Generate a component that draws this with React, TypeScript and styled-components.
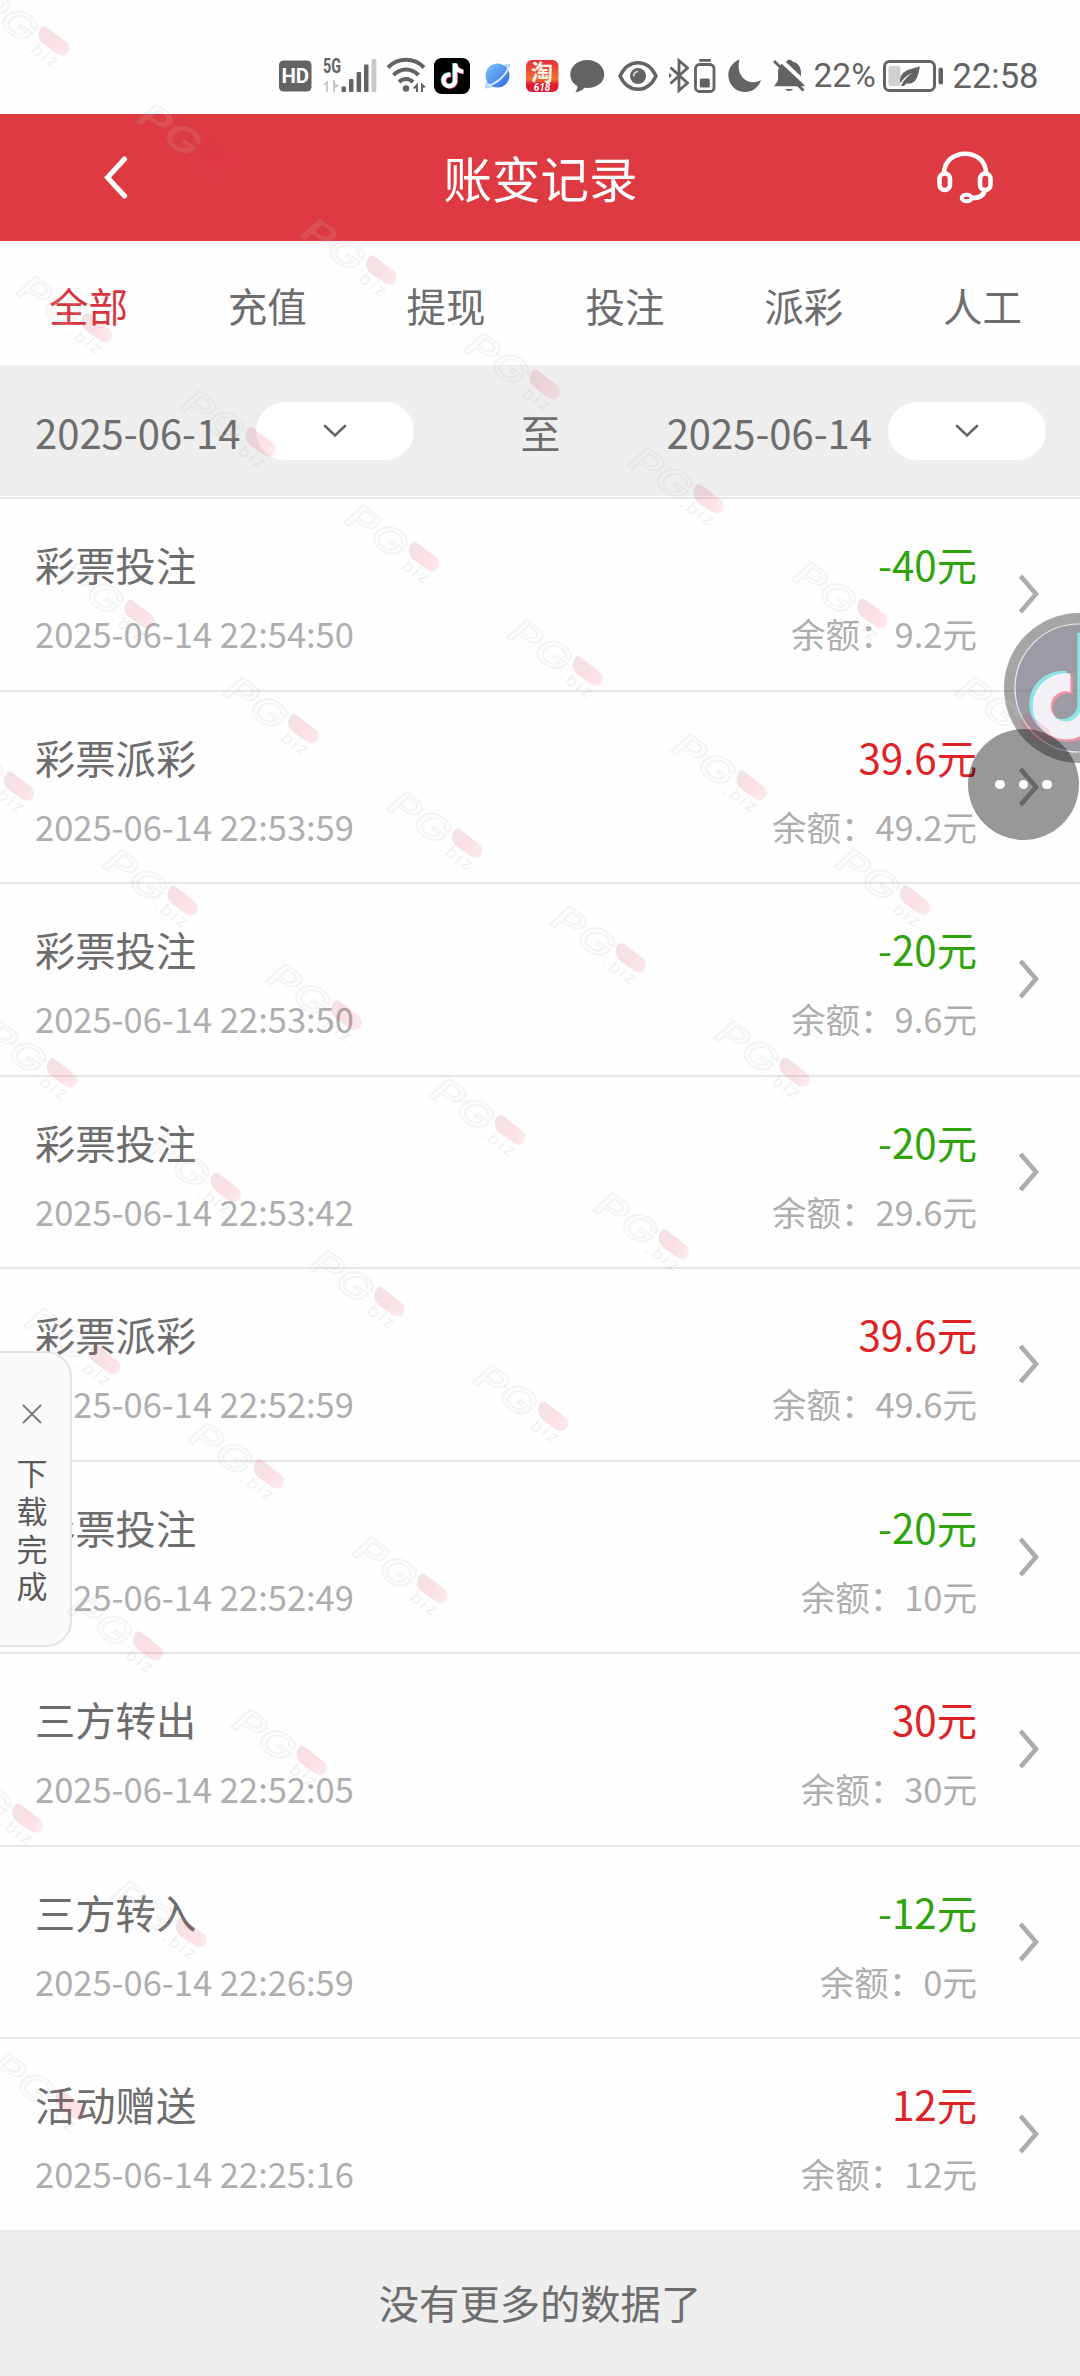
import React from "react";
import styled, { createGlobalStyle } from "styled-components";

const GlobalStyle = createGlobalStyle`
  *, *::before, *::after { box-sizing: border-box; }
  html, body { margin: 0; padding: 0; background: #fff; }
  body { font-family: "Noto Sans CJK SC", "Noto Sans", sans-serif; overflow: hidden; }
`;

const Page = styled.div`
  position: relative;
  width: 1080px;
  height: 2376px;
  overflow: hidden;
  display: flex;
  flex-direction: column;
  background: #fefefe;
  color: #6d6d6d;
`;

const StatusBar = styled.div`
  display: flex;
  align-items: center;
  height: 114px;
  padding: 37px 0 0 279px;
  flex: none;
  color: #636363;
`;

const StatusSlot = styled.div<{ $w: number; $gap?: number }>`
  flex: none;
  width: ${(p) => p.$w}px;
  height: 36px;
  margin-left: ${(p) => p.$gap ?? 0}px;
  svg { display: block; overflow: visible; }
`;

const StatusText = styled.span<{ $w: number; $gap: number; $size?: number }>`
  flex: none;
  width: ${(p) => p.$w}px;
  margin-left: ${(p) => p.$gap}px;
  font-family: Roboto, sans-serif;
  font-size: ${(p) => p.$size ?? 33.5}px;
  line-height: 36px;
  white-space: nowrap;
`;

const Header = styled.header`
  display: flex;
  align-items: center;
  justify-content: space-between;
  flex: none;
  height: 127px;
  padding: 0 87px 0 104px;
  background: #de3a41;
  color: #fff;
  svg { display: block; }
`;

const HeaderSide = styled.div<{ $end?: boolean }>`
  display: flex;
  width: 100px;
  padding-left: ${(p) => (p.$end ? 44 : 0)}px;
  margin-left: ${(p) => (p.$end ? 0 : -16)}px;
`;

const BackSlot = styled.div`
  padding-left: 16px;
`;

const Title = styled.h1`
  margin: 0 0 2px;
  font-size: 48.5px;
  line-height: 64px;
  font-weight: 400;
`;

const Tabs = styled.nav`
  display: flex;
  align-items: center;
  justify-content: space-between;
  flex: none;
  height: 124px;
  padding: 4px 58px 0 49px;
`;

const Tab = styled.span<{ $active?: boolean }>`
  font-size: 39.5px;
  line-height: 56px;
  color: ${(p) => (p.$active ? "#d8343f" : "#6d6d6d")};
`;

const FilterBar = styled.div`
  display: flex;
  align-items: center;
  justify-content: space-between;
  flex: none;
  height: 131px;
  padding: 0 34px 0 35px;
  background: #eee;
`;

const DateField = styled.div`
  display: flex;
  align-items: center;
  gap: 16px;
`;

const DateText = styled.span`
  font-size: 40px;
  line-height: 56px;
  padding-top: 2px;
`;

const DateSelect = styled.div`
  display: flex;
  align-items: center;
  justify-content: center;
  width: 158px;
  height: 58px;
  border-radius: 29px;
  background: #fff;
`;

const List = styled.div`
  flex: none;
  margin-top: 1px;
  border-bottom: 2px solid #e6e6e6;
`;

const Row = styled.div`
  display: flex;
  align-items: center;
  height: 192.5px;
  padding: 6px 40px 0 35px;
  border-top: 2px solid #e6e6e6;
`;

const Column = styled.div<{ $right?: boolean }>`
  display: flex;
  flex-direction: column;
  gap: 16px;
  flex: ${(p) => (p.$right ? "none" : "1")};
  align-items: ${(p) => (p.$right ? "flex-end" : "flex-start")};
`;

const Primary = styled.span<{ $color?: string }>`
  font-size: 40.3px;
  line-height: 56px;
  white-space: nowrap;
  color: ${(p) => p.$color ?? "#6d6d6d"};
`;

const Secondary = styled.span`
  font-size: 34.5px;
  line-height: 50px;
  white-space: nowrap;
  color: #aeaeae;
`;

const RowArrow = styled.svg`
  flex: none;
  margin: -6px 0 0 41px;
`;

const Footer = styled.footer`
  flex: 1;
  display: flex;
  align-items: center;
  justify-content: center;
  padding-bottom: 5px;
  background: #eee;
  font-size: 40.3px;
`;

const SideToast = styled.aside`
  position: absolute;
  left: -2px;
  top: 1351px;
  width: 74px;
  height: 296px;
  padding: 51px 6px 0 0;
  display: flex;
  flex-direction: column;
  align-items: center;
  gap: 29px;
  border: 2px solid #e4e4e4;
  border-radius: 0 26px 26px 0;
  background: #fafafa;
  svg { display: block; flex: none; }
`;

const ToastText = styled.div`
  display: flex;
  flex-direction: column;
  align-items: center;
  font-size: 31px;
  line-height: 37.8px;
  color: #5a5a5a;
`;

const FloatingApp = styled.svg`
  position: absolute;
  left: 1004px;
  top: 613px;
`;

const MoreBubble = styled.div`
  position: absolute;
  left: 968px;
  top: 729px;
  width: 111px;
  height: 111px;
  border-radius: 50%;
  background: rgba(0, 0, 0, 0.4);
  display: flex;
  align-items: center;
  justify-content: center;
  gap: 14px;
`;

const Dot = styled.i`
  width: 9.5px;
  height: 9.5px;
  border-radius: 50%;
  background: #fff;
`;

const WatermarkLayer = styled.svg`
  position: absolute;
  inset: 0;
  pointer-events: none;
`;

const GREEN = "#2fa30c";
const RED = "#df2226";

type Entry = { kind: string; time: string; amount: string; balance: string };

const entries: Entry[] = [
  { kind: "彩票投注", time: "2025-06-14 22:54:50", amount: "-40", balance: "9.2" },
  { kind: "彩票派彩", time: "2025-06-14 22:53:59", amount: "39.6", balance: "49.2" },
  { kind: "彩票投注", time: "2025-06-14 22:53:50", amount: "-20", balance: "9.6" },
  { kind: "彩票投注", time: "2025-06-14 22:53:42", amount: "-20", balance: "29.6" },
  { kind: "彩票派彩", time: "2025-06-14 22:52:59", amount: "39.6", balance: "49.6" },
  { kind: "彩票投注", time: "2025-06-14 22:52:49", amount: "-20", balance: "10" },
  { kind: "三方转出", time: "2025-06-14 22:52:05", amount: "30", balance: "30" },
  { kind: "三方转入", time: "2025-06-14 22:26:59", amount: "-12", balance: "0" },
  { kind: "活动赠送", time: "2025-06-14 22:25:16", amount: "12", balance: "12" },
];

const tabs = ["全部", "充值", "提现", "投注", "派彩", "人工"];

const NOTE = "M16.6 5.82c-.68-.78-1.06-1.78-1.06-2.82h-3.09v12.4a2.592 2.592 0 0 1-2.59 2.5c-1.42 0-2.6-1.16-2.6-2.6 0-1.72 1.66-3.01 3.37-2.48V9.66c-3.45-.46-6.47 2.22-6.47 5.64 0 3.33 2.76 5.7 5.69 5.7 3.14 0 5.69-2.55 5.69-5.7V9.01a7.35 7.35 0 0 0 4.3 1.38V7.3s-1.88.09-3.24-1.48z";

/* Lattice of watermark marks: [diagonal, first step, last step] */
const diagonals: [number, number, number][] = [
  [0, 0, 6], [1, 0, 5], [2, 0, 4], [3, -1, 3], [4, -1, 2],
  [5, -1, 1], [6, -1, 0], [7, -2, -1], [8, -2, -2],
];

function Watermarks() {
  const marks: [number, number][] = [];
  diagonals.forEach(([j, from, to]) => {
    for (let i = from; i <= to; i++) marks.push([52.5 + 163.7 * i + 43 * j, 41 + 114.5 * i + 286.6 * j]);
  });
  return (
    <WatermarkLayer width="1080" height="2376" viewBox="0 0 1080 2376">
      <defs>
        <linearGradient id="pill" x1="0" y1="0" x2="1" y2="0">
          <stop offset="0" stopColor="#a83a50" stopOpacity=".14" />
          <stop offset=".5" stopColor="#e23350" stopOpacity=".15" />
          <stop offset="1" stopColor="#f04a6c" stopOpacity=".12" />
        </linearGradient>
      </defs>
      {marks.map(([x, y], n) => (
        <g key={n} transform={`translate(${x.toFixed(1)} ${y.toFixed(1)}) rotate(35)`}>
          <g fontFamily="Inter, sans-serif" fontStyle="italic">
            <text x="-86" y="18" fontSize="35" fontWeight="500" textLength="67" lengthAdjust="spacingAndGlyphs" fill="#fff" fillOpacity=".1" stroke="#999" strokeOpacity=".1" strokeWidth="2">PG</text>
            <text x="-19" y="22" fontSize="17" fontWeight="400" textLength="36" fill="#888" fillOpacity=".13">.biz</text>
          </g>
          <path d="M-17-4c0-3 2-4 5-4L11-7c5 0 8 4 8 8s-3 7-8 7H-4C-12 8-17 3-17-4z" fill="url(#pill)" />
        </g>
      ))}
    </WatermarkLayer>
  );
}

function StatusIcons() {
  return (
    <StatusBar>
      <StatusSlot $w={33}>
        <svg width="33" height="36" viewBox="0 0 33 36">
          <rect x="0" y="2.5" width="32.5" height="31" rx="4.5" fill="#636363" />
          <text x="16.3" y="25.3" fontFamily="Roboto, sans-serif" fontWeight="700" fontSize="20.5" textAnchor="middle" fill="#fff">HD</text>
        </svg>
      </StatusSlot>
      <StatusSlot $w={54} $gap={11}>
        <svg width="54" height="36" viewBox="0 0 54 36">
          <text x="0" y="15" fontFamily="Roboto, sans-serif" fontWeight="700" fontSize="20" textLength="18" lengthAdjust="spacingAndGlyphs" fill="#636363">5G</text>
          <g fill="#c9c9c9"><path d="M5 22v12H3V27H0zM10 22v12h2v-4l4-2-4-3v-3z" /><rect x="48.5" y="1" width="4.8" height="33" rx="1" /></g>
          <g fill="#636363">
            <rect x="18.5" y="28.5" width="4.5" height="5.5" rx="1" />
            <rect x="26" y="21" width="4.5" height="13" rx="1" />
            <rect x="33.6" y="14" width="4.5" height="20" rx="1" />
            <rect x="41" y="6.5" width="4.5" height="27.5" rx="1" />
          </g>
        </svg>
      </StatusSlot>
      <StatusSlot $w={40} $gap={10}>
        <svg width="40" height="36" viewBox="0 0 40 36" fill="none" stroke="#636363" strokeWidth="4">
          <path d="M1 9.5C11-.7 27-.7 37 9.5" /><path d="M6.5 17C14 9.5 24 9.5 31.5 17" /><path d="M12 24c4-4 10-4 14 0" />
          <circle cx="19" cy="30.5" r="3.2" fill="#636363" stroke="none" />
          <path d="M31 24.5v9.5h-2v-3.5h-3.500zM34 24.500l5 4.500-3 1v4h-2z" fill="#636363" stroke="none" />
        </svg>
      </StatusSlot>
      <StatusSlot $w={36} $gap={6.5}>
        <svg width="36" height="36" viewBox="0 0 36 36">
          <rect width="36" height="36" rx="7.5" fill="#000" />
          <g transform="translate(1.8 1.3) scale(1.38)"><path d={NOTE} fill="#25d9d3" transform="translate(-.6 -.3)" /><path d={NOTE} fill="#f0305a" transform="translate(.6 .4)" /><path d={NOTE} fill="#fff" /></g>
        </svg>
      </StatusSlot>
      <StatusSlot $w={28} $gap={14}>
        <svg width="28" height="36" viewBox="0 0 28 36">
          <defs><linearGradient id="planet" x1="0" y1="0" x2="1" y2="1"><stop offset="0" stopColor="#7fc4ff" /><stop offset="1" stopColor="#2f68dc" /></linearGradient></defs>
          <ellipse cx="13.5" cy="18" rx="17" ry="5" transform="rotate(-45 13.5 18)" fill="#b4d8fb" />
          <circle cx="13.5" cy="17.5" r="12" fill="url(#planet)" />
          <path d="M3 27.5C11 27 21.5 18 25 9" fill="none" stroke="#d8ecff" strokeWidth="2" />
        </svg>
      </StatusSlot>
      <StatusSlot $w={33} $gap={14}>
        <svg width="33" height="36" viewBox="0 0 33 36">
          <defs><linearGradient id="shop" x1="0" y1="0" x2="0" y2="1"><stop offset="0" stopColor="#e5303f" /><stop offset=".6" stopColor="#f0702c" /><stop offset=".75" stopColor="#e01c34" /></linearGradient></defs>
          <rect y="2" width="32.5" height="32" rx="6" fill="url(#shop)" />
          <text x="16" y="22" fontFamily="Noto Sans CJK SC, sans-serif" fontWeight="700" fontSize="22" textAnchor="middle" fill="#fff3e6">淘</text>
          <text x="16" y="33" fontFamily="Roboto, sans-serif" fontStyle="italic" fontWeight="700" fontSize="10" textAnchor="middle" fill="#fff">618</text>
        </svg>
      </StatusSlot>
      <StatusSlot $w={35} $gap={11.5}>
        <svg width="35" height="36" viewBox="0 0 35 36" fill="#636363">
          <path d="M17.3 2C7.5 2 .3 8.5.3 16.5c0 5 2.7 9 7 11.5.3 2.5-.7 4.5-2 6.2 4-.4 7-2 9.200-4.400 11.300 1 19.800-4.800 19.800-13.300C34.300 8.500 27 2 17.300 2z" />
        </svg>
      </StatusSlot>
      <StatusSlot $w={40} $gap={12.5}>
        <svg width="40" height="36" viewBox="0 0 40 36">
          <path d="M2 18C6 9.5 12 4.7 20 4.7S34 9.5 38 18c-4 8.5-10 13.3-18 13.3S6 26.5 2 18z" fill="none" stroke="#636363" strokeWidth="3.4" />
          <circle cx="20" cy="18" r="8" fill="#636363" /><path d="M15.7 18.5A4.5 4.5 0 0 1 20 13.5" stroke="#e4e4e4" strokeWidth="1.6" fill="none" />
        </svg>
      </StatusSlot>
      <StatusSlot $w={21} $gap={11.5}>
        <svg width="21" height="36" viewBox="0 0 21 36" fill="none" stroke="#636363" strokeWidth="2.8">
          <path d="M1.5 9.5 18.5 25l-8.5 7.5v-30L18.5 10 1.5 25.5" /><path d="M0 15v5l3-2.5z" fill="#636363" stroke="none" />
        </svg>
      </StatusSlot>
      <StatusSlot $w={22} $gap={4}>
        <svg width="22" height="36" viewBox="0 0 22 36">
          <rect x="5" y="1" width="12" height="2.8" rx="1" fill="#636363" /><rect x="1.5" y="6.5" width="18.5" height="27" rx="4" fill="none" stroke="#636363" strokeWidth="2.8" /><rect x="5.8" y="20.5" width="10" height="9" rx="1.5" fill="#636363" />
        </svg>
      </StatusSlot>
      <StatusSlot $w={34} $gap={11.5}>
        <svg width="34" height="36" viewBox="0 0 34 36"><path d="M11.5 1.5C5 4 .3 10 .3 17c0 9.5 7.4 17 16.7 17 7.5 0 13.8-4.5 16-12-12.5 7-26-3.5-21.5-20.5z" fill="#636363" /></svg>
      </StatusSlot>
      <StatusSlot $w={34} $gap={11}>
        <svg width="34" height="36" viewBox="0 0 34 36">
          <g fill="#636363"><path d="M16.5 1.7c-1.6 0-2.5.9-3 1.9C7.5 5 5 9.5 5 15v7.5l-4 5.7h31l-4-5.7V15c0-5.5-2.5-10-8.5-11.4-.5-1-1.4-1.9-3-1.9z" /><path d="M12 31h8c-1.5 2.6-6.5 2.6-8 0z" /></g>
          <path d="m4-1.5 33 31" stroke="#fff" strokeWidth="4" /><path d="m1 3 29.5 29.5" stroke="#636363" strokeWidth="2.8" />
        </svg>
      </StatusSlot>
      <StatusText $w={62} $gap={7}>22%</StatusText>
      <StatusSlot $w={61} $gap={7}>
        <svg width="61" height="36" viewBox="0 0 61 36">
          <rect x="1.5" y="3.5" width="50" height="29" rx="5" fill="none" stroke="#636363" strokeWidth="3" />
          <rect x="5.5" y="8" width="12" height="20" rx="2" fill="#d0d0d0" /><rect x="55.5" y="9.5" width="4.5" height="17" rx="2" fill="#636363" />
          <path d="M37 8.5c-7 2-19 3-20 13.5 0 1 .2 2 .6 3 3-5 7-8 12-10.5-5 4-9.5 8-11.5 13.5h3c.8-1.2 1.6-2 2.5-2.5C34 27 35 17 37 8.5z" fill="#636363" />
        </svg>
      </StatusSlot>
      <StatusText $w={90} $gap={9} $size={34.5}>22:58</StatusText>
    </StatusBar>
  );
}

const SmallChevron = () => (
  <svg width="24" height="14" viewBox="0 0 24 14" fill="none" stroke="#666" strokeWidth="2.6" strokeLinecap="round"><path d="m2 2 10 9.5L22 2" /></svg>
);

export default function App() {
  return (
    <Page>
      <GlobalStyle />
      <StatusIcons />
      <Header>
        <HeaderSide>
          <BackSlot>
            <svg width="24" height="46" viewBox="0 0 24 46" fill="none" stroke="#fff" strokeWidth="5" strokeLinecap="round"><path d="M20.5 4 3.5 22.5l17 18.5" /></svg>
          </BackSlot>
        </HeaderSide>
        <Title>账变记录</Title>
        <HeaderSide $end>
          <svg width="56" height="54" viewBox="0 0 56 54" fill="none" stroke="#fff" strokeWidth="4.6">
            <path d="M7 23C6.5-4 50-4 49 23" /><rect x="2.5" y="22.5" width="10.5" height="16.5" rx="5.25" /><rect x="43" y="22.5" width="10.5" height="16.5" rx="5.25" />
            <path d="M48 38.5c-1 6-5 8.5-12.5 8.5" /><ellipse cx="29.7" cy="47" rx="5" ry="3.3" strokeWidth="4" />
          </svg>
        </HeaderSide>
      </Header>
      <Tabs>{tabs.map((t, i) => <Tab key={t} $active={i === 0}>{t}</Tab>)}</Tabs>
      <FilterBar>
        <DateField><DateText>2025-06-14</DateText><DateSelect><SmallChevron /></DateSelect></DateField>
        <DateText>至</DateText>
        <DateField><DateText>2025-06-14</DateText><DateSelect><SmallChevron /></DateSelect></DateField>
      </FilterBar>
      <List>
        {entries.map((e) => (
          <Row key={e.time}>
            <Column>
              <Primary>{e.kind}</Primary>
              <Secondary>{e.time}</Secondary>
            </Column>
            <Column $right>
              <Primary $color={e.amount.startsWith("-") ? GREEN : RED}>{e.amount}元</Primary>
              <Secondary>余额：{e.balance}元</Secondary>
            </Column>
            <RowArrow width="22" height="42" viewBox="0 0 22 42" fill="none" stroke="#acacac" strokeWidth="4.6"><path d="m2.5 3 15.5 18-15.5 18" /></RowArrow>
          </Row>
        ))}
      </List>
      <Footer>没有更多的数据了</Footer>
      <SideToast>
        <svg width="20" height="20" viewBox="0 0 20 20" stroke="#777" strokeWidth="1.8"><path d="m1 1 18 18M19 1 1 19" /></svg>
        <ToastText>{[..."下载完成"].map((c) => <span key={c}>{c}</span>)}</ToastText>
      </SideToast>
      <FloatingApp width="76" height="150" viewBox="0 0 76 150">
        <circle cx="75" cy="75" r="75" fill="#000" fillOpacity=".35" />
        <circle cx="75" cy="75" r="64" fill="#8f8ba0" fillOpacity=".4" stroke="#e9e9e9" strokeWidth="1.2" />
        <g transform="translate(3.5 4) scale(5.8)">
          <path d={NOTE} fill="#ee93a6" transform="translate(.6 .5)" />
          <path d={NOTE} fill="#8ce6e6" transform="translate(-.4 -.3)" />
          <path d={NOTE} fill="#f3f1f6" transform="translate(.2 .1)" />
        </g>
      </FloatingApp>
      <MoreBubble><Dot /><Dot /><Dot /></MoreBubble>
      <Watermarks />
    </Page>
  );
}
